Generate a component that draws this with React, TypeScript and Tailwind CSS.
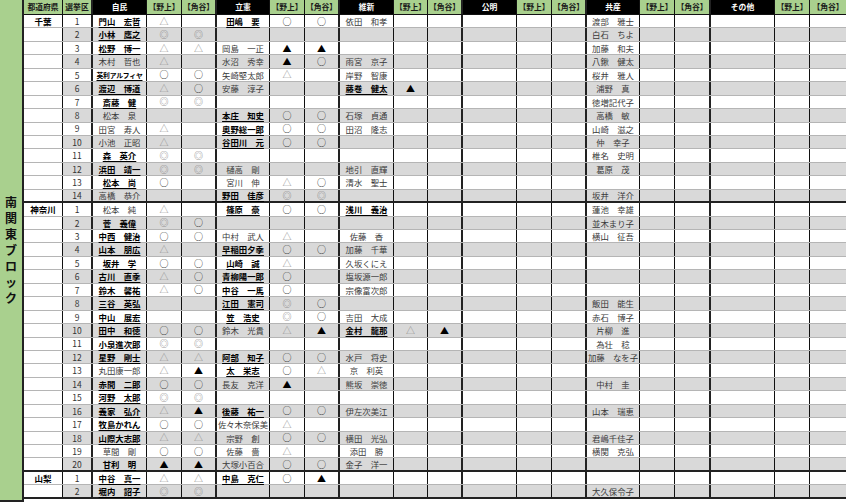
import React from 'react';

const COLS =
  'grid grid-cols-[39px_30px_54px_35px_35px_53px_35px_35px_54px_34px_35px_54px_35px_35px_53px_35px_36px_64px_35px_36px]';

const THIN = 'border-r border-r-[#111]';
const THICK = 'border-r-2 border-r-[#222]';
const rightBorders = [
  THIN, THICK,
  THIN, THIN, THICK,
  THIN, THIN, THICK,
  THIN, THIN, THICK,
  THIN, THIN, THICK,
  THIN, THIN, THICK,
  THIN, THIN, '',
];

const headers = [
  '都道府県', '選挙区',
  '自民', '【野上】', '【角谷】',
  '立憲', '【野上】', '【角谷】',
  '維新', '【野上】', '【角谷】',
  '公明', '【野上】', '【角谷】',
  '共産', '【野上】', '【角谷】',
  'その他', '【野上】', '【角谷】',
];
const partyCols = [2, 5, 8, 11, 14, 17];

// num|自民|野上|角谷|立憲|野上|角谷|維新|野上|角谷|共産   (* = bold + underline)
const groups: { pref: string; rows: string[] }[] = [
  {
    pref: '千葉',
    rows: [
      '1|*門山　宏哲|△||*田嶋　要|○|○|依田　和孝|||渡部　雅士',
      '2|*小林　鷹之|◎|◎|||||||白石　ちよ',
      '3|*松野　博一|△|△|岡島　一正|▲|▲||||加藤　和夫',
      '4|木村　哲也|△||水沼　秀幸|▲|○|雨宮　京子|||八鍬　健太',
      '5|*英利アルフィヤ|○|○|矢崎堅太郎|△||岸野　智康|||桜井　雅人',
      '6|*渡辺　博道|△|○|安藤　淳子|||*藤巻　健太|▲||浦野　真',
      '7|*斎藤　健|◎|◎|||||||徳増記代子',
      '8|松本　泉|||*本庄　知史|○|○|石塚　貞通|||高橋　敏',
      '9|田宮　寿人|△||*奥野総一郎|○|○|田沼　隆志|||山崎　滋之',
      '10|小池　正昭|△||*谷田川　元|○|○||||仲　幸子',
      '11|*森　英介|◎|◎|||||||椎名　史明',
      '12|*浜田　靖一|◎|◎|樋高　剛|||地引　直輝|||葛原　茂',
      '13|*松本　尚|○||宮川　伸|△|○|清水　聖士|||',
      '14|高橋　恭介|||*野田　佳彦|◎|◎||||坂井　洋介',
    ],
  },
  {
    pref: '神奈川',
    rows: [
      '1|松本　純|△||*篠原　豪|○|○|*浅川　義治|||蓮池　幸雄',
      '2|*菅　義偉|◎|○|||||||並木まり子',
      '3|*中西　健治|○|○|中村　武人|△||佐藤　香|||横山　征吾',
      '4|*山本　朋広|△||*早稲田夕季|○|○|加藤　千華|||',
      '5|*坂井　学|○|○|*山崎　誠|△||久坂くにえ|||',
      '6|*古川　直季|△|○|*青柳陽一郎|○||塩坂源一郎|||',
      '7|*鈴木　馨祐|△|○|*中谷　一馬|○||宗像富次郎|||',
      '8|*三谷　英弘|||*江田　憲司|◎|○||||飯田　能生',
      '9|*中山　展宏|||*笠　浩史|◎|○|吉田　大成|||赤石　博子',
      '10|*田中　和徳|○|○|鈴木　光貴|△|▲|*金村　龍那|△|▲|片柳　進',
      '11|*小泉進次郎|◎|◎|||||||為壮　稔',
      '12|*星野　剛士|△|△|*阿部　知子|○|○|水戸　将史|||加藤　なを子',
      '13|丸田康一郎|△|▲|*太　栄志|○|△|京　利英|||',
      '14|*赤間　二郎|○|○|長友　克洋|▲||熊坂　崇徳|||中村　圭',
      '15|*河野　太郎|◎|◎||||||| ',
      '16|*義家　弘介|△|▲|*後藤　祐一|○|○|伊左次美江|||山本　瑞恵',
      '17|*牧島かれん|○|○|佐々木奈保美|△|||||',
      '18|*山際大志郎|△|△|宗野　創|○|○|横田　光弘|||君嶋千佳子',
      '19|草間　剛|○|○|佐藤　嗇|△||添田　勝|||横関　克弘',
      '20|*甘利　明|▲|▲|大塚小百合|○|○|金子　洋一|||',
    ],
  },
  {
    pref: '山梨',
    rows: [
      '1|*中谷　真一|△|△|*中島　克仁|○|▲||||',
      '2|*堀内　詔子|◎|◎|||||||大久保令子',
    ],
  },
];

const markColor: Record<string, string> = {
  '○': 'text-[#222]',
  '◎': 'text-[#7a7a7a]',
  '△': 'text-[#8c8c8c]',
  '▲': 'text-black',
};

function toCells(pref: string, line: string): string[] {
  const p = line.split('|');
  while (p.length < 11) p.push('');
  return [
    pref, p[0],
    p[1], p[2], p[3],
    p[4], p[5], p[6],
    p[7], p[8], p[9],
    '', '', '',
    p[10].trim(), '', '',
    '', '', '',
  ];
}

function CellText({ value, col }: { value: string; col: number }) {
  if (!value) return null;
  if (col === 0) return <span className="font-bold text-[8.5px] text-black">{value}</span>;
  if (col === 1) return <span className="text-[8.5px] text-[#333]">{value}</span>;
  if (markColor[value]) return <span className={`text-[9px] ${markColor[value]}`}>{value}</span>;
  const bold = value.startsWith('*');
  const text = bold ? value.slice(1) : value;
  const small = text.length > 6;
  return (
    <span
      className={
        (bold ? 'font-bold text-black underline decoration-1 underline-offset-[1.5px] ' : 'text-[#3a3a3a] ') +
        (small ? 'text-[6.8px] tracking-[-0.2px]' : 'text-[8.4px]') +
        ' whitespace-nowrap'
      }
    >
      {text}
    </span>
  );
}

export default function App() {
  return (
    <div className="w-[846px] h-[502px] overflow-hidden bg-white flex font-['Noto_Sans_CJK_JP',sans-serif] leading-none">
      {/* block label */}
      <div className="w-[24px] shrink-0 bg-[#a9d08e] border-r-2 border-r-[#222] border-b-2 border-b-[#222] flex flex-col items-center justify-center gap-[4px]">
        {'南関東ブロック'.split('').map((c, i) => (
          <span key={i} className="font-bold text-[12px] leading-[12px] text-[#111]">
            {c}
          </span>
        ))}
      </div>

      <div className="flex-1 flex flex-col">
        <div className={`${COLS} h-[15px] border-b border-b-[#111]`}>
          {headers.map((h, i) => {
            const party = partyCols.includes(i);
            return (
              <div
                key={i}
                className={`flex items-center justify-center ${rightBorders[i]} ${
                  party ? 'bg-black text-white' : 'bg-[#a9d08e] text-[#1a1a1a]'
                } font-bold text-[7.8px] whitespace-nowrap`}
              >
                {h}
              </div>
            );
          })}
        </div>

        {groups.map((g) =>
          g.rows.map((line, ri) => {
            const cells = toCells(ri === 0 ? g.pref : '', line);
            const last = ri === g.rows.length - 1;
            const gray = ri % 2 === 1;
            return (
              <div
                key={g.pref + ri}
                className={`${COLS} h-[13.45px] ${
                  last ? 'border-b-2 border-b-[#222]' : 'border-b border-b-[#b5b5b5]'
                }`}
              >
                {cells.map((v, ci) => (
                  <div
                    key={ci}
                    className={`flex items-center justify-center ${rightBorders[ci]} ${
                      gray && ci > 0 ? 'bg-[#d9d9d9]' : 'bg-white'
                    }`}
                  >
                    <CellText value={v} col={ci} />
                  </div>
                ))}
              </div>
            );
          })
        )}
      </div>
    </div>
  );
}
